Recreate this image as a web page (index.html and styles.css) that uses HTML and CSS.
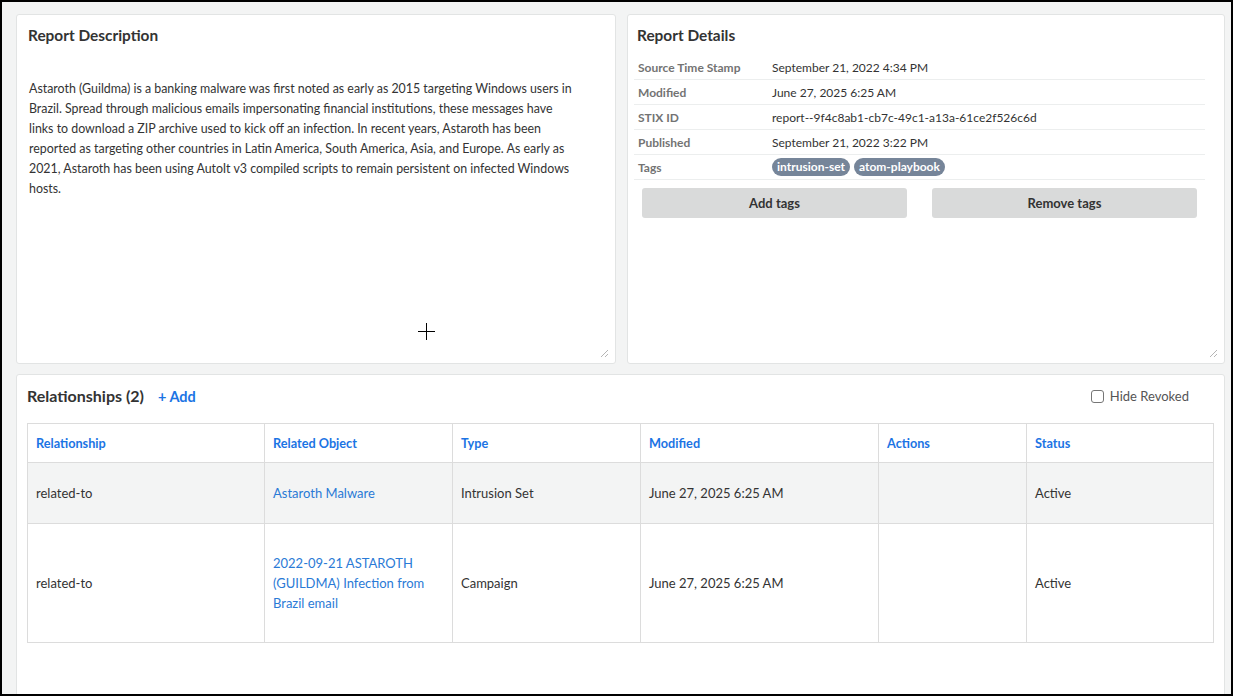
FILE: index.html
```html
<!DOCTYPE html>
<html>
<head>
<meta charset="utf-8">
<link rel="stylesheet" href="styles.css">
</head>
<body>
<div class="frame">
  <div class="top-row">
    <section class="card desc-card">
      <h2 class="card-title">Report Description</h2>
      <p class="desc-text">Astaroth (Guildma) is a banking malware was first noted as early as 2015 targeting Windows users in Brazil. Spread through malicious emails impersonating financial institutions, these messages have links to download a ZIP archive used to kick off an infection. In recent years, Astaroth has been reported as targeting other countries in Latin America, South America, Asia, and Europe. As early as 2021, Astaroth has been using AutoIt v3 compiled scripts to remain persistent on infected Windows hosts.</p>
      <svg class="cursor" width="17" height="17" viewBox="0 0 17 17"><path d="M8.5 0v17M0 8.5h17" stroke="#000" stroke-width="1"/></svg>
      <svg class="resizer" width="9" height="9" viewBox="0 0 9 9"><path d="M1 8L8 1M5 8L8 5" stroke="#b5b5b5" stroke-width="1"/></svg>
    </section>
    <section class="card details-card">
      <h2 class="card-title">Report Details</h2>
      <div class="details">
        <div class="drow"><span class="dlabel">Source Time Stamp</span><span class="dvalue">September 21, 2022 4:34 PM</span></div>
        <div class="drow"><span class="dlabel">Modified</span><span class="dvalue">June 27, 2025 6:25 AM</span></div>
        <div class="drow"><span class="dlabel">STIX ID</span><span class="dvalue">report--9f4c8ab1-cb7c-49c1-a13a-61ce2f526c6d</span></div>
        <div class="drow"><span class="dlabel">Published</span><span class="dvalue">September 21, 2022 3:22 PM</span></div>
        <div class="drow"><span class="dlabel">Tags</span><span class="dvalue tags"><span class="tag">intrusion-set</span><span class="tag">atom-playbook</span></span></div>
      </div>
      <div class="btns">
        <button class="btn">Add tags</button>
        <button class="btn">Remove tags</button>
      </div>
      <svg class="resizer" width="9" height="9" viewBox="0 0 9 9"><path d="M1 8L8 1M5 8L8 5" stroke="#b5b5b5" stroke-width="1"/></svg>
    </section>
  </div>
  <section class="card rel-card">
    <div class="rel-head">
      <h2 class="card-title rel-title">Relationships (2)</h2>
      <a class="add-link">+ Add</a>
      <label class="hide-rev"><span class="checkbox"></span>Hide Revoked</label>
    </div>
    <table class="rel-table">
      <colgroup>
        <col style="width:237px"><col style="width:188px"><col style="width:188px"><col style="width:238px"><col style="width:148px"><col>
      </colgroup>
      <thead>
        <tr><th>Relationship</th><th>Related Object</th><th>Type</th><th>Modified</th><th>Actions</th><th>Status</th></tr>
      </thead>
      <tbody>
        <tr class="row-a"><td>related-to</td><td><a class="obj-link">Astaroth Malware</a></td><td>Intrusion Set</td><td>June 27, 2025 6:25 AM</td><td></td><td>Active</td></tr>
        <tr class="row-b"><td>related-to</td><td><a class="obj-link">2022-09-21 ASTAROTH (GUILDMA) Infection from Brazil email</a></td><td>Campaign</td><td>June 27, 2025 6:25 AM</td><td></td><td>Active</td></tr>
      </tbody>
    </table>
  </section>
</div>
</body>
</html>
```
FILE: styles.css
```css
* { box-sizing: border-box; }
html, body { margin: 0; padding: 0; }
body {
  font-family: "Lato", "Noto Sans", sans-serif;
  color: #333;
  font-size: 13px;
}
.frame {
  width: 1233px;
  height: 696px;
  border: 2px solid #000;
  background: #f3f4f4;
  padding: 12px 6px 0 14px;
  overflow: hidden;
}
.top-row {
  display: flex;
  gap: 11px;
  height: 350px;
}
.card {
  background: #fff;
  border: 1px solid #e2e4e4;
  border-radius: 3px;
  position: relative;
}
.desc-card { width: 600px; padding: 10px 11px; }
.details-card { flex: 1; padding: 10px 19px 10px 6px; }
.card-title {
  margin: 0;
  font-size: 15.4px;
  font-weight: 700;
  line-height: 20px;
  color: #333;
}
.details-card .card-title { padding-left: 3px; }
.desc-text {
  margin: 34px 0 0 1px;
  width: 546px;
  line-height: 20px;
  font-size: 12.4px;
}
.cursor { position: absolute; left: 401px; top: 308px; }
.resizer { position: absolute; right: 6px; bottom: 5px; }
.details { margin-top: 10px; }
.drow {
  display: flex;
  height: 25px;
  align-items: center;
  border-bottom: 1px solid #eceeee;
  padding-left: 4px;
}
.dlabel {
  width: 134px;
  font-size: 12px;
  font-weight: 700;
  color: #737373;
}
.dvalue { font-size: 12px; color: #333; }
.tags { display: flex; gap: 4px; }
.tag {
  background: #768599;
  color: #fff;
  font-size: 12px;
  font-weight: 700;
  border-radius: 9px;
  height: 18px;
  line-height: 18px;
  padding: 0 5px;
}
.btns {
  display: flex;
  gap: 25px;
  padding: 8px 8px 0 8px;
}
.btn {
  flex: 1;
  height: 30px;
  border: none;
  border-radius: 3px;
  background: #d9dada;
  font-family: inherit;
  font-size: 13px;
  font-weight: 700;
  color: #333;
}
.rel-card {
  margin-top: 10px;
  height: 340px;
  padding: 11px 10px;
}
.rel-head {
  display: flex;
  align-items: center;
  height: 20px;
}
.rel-title { margin-right: 14px; font-size: 16px; }
.add-link {
  color: #1b74e4;
  font-weight: 700;
  font-size: 14.5px;
}
.hide-rev {
  margin-left: auto;
  margin-right: 25px;
  display: flex;
  align-items: center;
  font-size: 13px;
  color: #555;
}
.checkbox {
  width: 13px;
  height: 13px;
  border: 1px solid #767676;
  border-radius: 3px;
  margin-right: 6px;
}
.rel-table {
  margin-top: 17px;
  width: 100%;
  border-collapse: collapse;
  table-layout: fixed;
  border: 1px solid #dcdcdc;
}
.rel-table th, .rel-table td {
  border: 1px solid #dcdcdc;
  text-align: left;
  padding: 0 8px;
  vertical-align: middle;
  line-height: 20px;
}
.rel-table th {
  height: 39px;
  color: #1b74e4;
  font-size: 12.7px;
  font-weight: 700;
}
.rel-table td { font-size: 13px; color: #333; }
.row-a td { height: 61px; background: #f3f4f4; }
.row-b td { height: 119px; background: #fff; }
.obj-link { color: #2a7ad6; }
```
